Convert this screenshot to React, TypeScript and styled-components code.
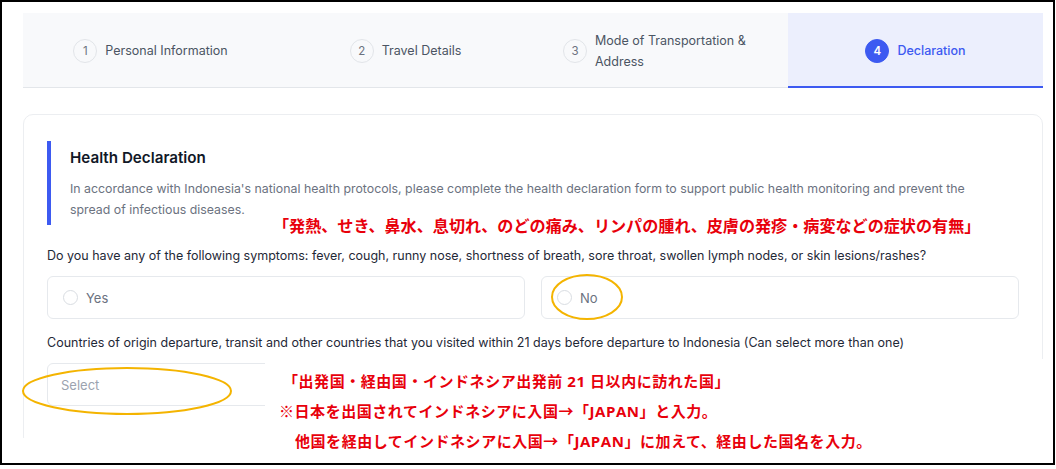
import React from "react";
import styled, { createGlobalStyle } from "styled-components";

const Global = createGlobalStyle`
  html, body { margin: 0; padding: 0; background: #ffffff; }
  body { font-family: Inter, "Noto Sans", Arial, sans-serif; }
  * { box-sizing: border-box; }
`;

const Frame = styled.div`
  position: relative;
  width: 1055px;
  height: 465px;
  border: 2px solid #000;
  background: #fff;
  overflow: hidden;
`;

const Shot = styled.div`
  height: 436px;
  overflow: hidden;
  padding: 11px 10px 0 21px;
  display: flex;
  flex-direction: column;
  gap: 26px;
  & > * { flex-shrink: 0; }
`;

const TabBar = styled.div`
  display: grid;
  grid-template-columns: repeat(4, 1fr);
  height: 75px;
  background: #f8f9fb;
  border-bottom: 1px solid #e3e6ea;
`;

const Tab = styled.div<{ $active?: boolean }>`
  display: flex;
  align-items: center;
  justify-content: center;
  gap: 8px;
  background: ${(p) => (p.$active ? "#eceffd" : "transparent")};
  box-shadow: ${(p) => (p.$active ? "inset 0 -2px 0 #3d5af1" : "none")};
  margin-bottom: -1px;
`;

const StepNum = styled.span<{ $active?: boolean }>`
  flex: none;
  width: 24px;
  height: 24px;
  border-radius: 50%;
  display: flex;
  align-items: center;
  justify-content: center;
  font-size: 11.5px;
  font-weight: ${(p) => (p.$active ? 600 : 400)};
  color: ${(p) => (p.$active ? "#ffffff" : "#6b7280")};
  background: ${(p) => (p.$active ? "#3d5af1" : "transparent")};
  border: 1px solid ${(p) => (p.$active ? "#3d5af1" : "#e2e5e9")};
`;

const StepLabel = styled.span<{ $active?: boolean }>`
  max-width: 163px;
  font-size: 12.5px;
  line-height: 21px;
  font-weight: ${(p) => (p.$active ? 500 : 400)};
  color: ${(p) => (p.$active ? "#3d5af1" : "#4b5563")};
`;

const Card = styled.div`
  border: 1px solid #eceef1;
  border-radius: 10px;
  padding: 26px 23px 40px 23px;
  display: flex;
  flex-direction: column;
`;

const Header = styled.div`
  border-left: 4px solid #3d5af1;
  padding: 5px 0 5px 19px;
`;

const Title = styled.h2`
  margin: 0 0 8px 0;
  font-size: 15.2px;
  line-height: 24px;
  font-weight: 600;
  color: #111827;
`;

const Desc = styled.p`
  margin: 0;
  max-width: 900px;
  font-size: 12.35px;
  line-height: 21px;
  color: #6b7280;
`;

const Question = styled.div<{ $top: number }>`
  margin-top: ${(p) => p.$top}px;
  font-size: 12.5px;
  line-height: 20px;
  color: #1f2937;
`;

const Options = styled.div`
  margin-top: 10px;
  display: grid;
  grid-template-columns: 1fr 1fr;
  gap: 16px;
`;

const Option = styled.label`
  height: 43px;
  border: 1px solid #e6e9ed;
  border-radius: 6px;
  display: flex;
  align-items: center;
  gap: 8px;
  padding-left: 15px;
  font-size: 13px;
  color: #6b7280;
`;

const Radio = styled.span`
  width: 15px;
  height: 15px;
  border-radius: 50%;
  border: 1px solid #d9dde2;
  background: #fff;
`;

const SelectBox = styled.div`
  margin-top: 10px;
  height: 43px;
  border: 1px solid #e6e9ed;
  border-radius: 6px;
  display: flex;
  align-items: center;
  padding-left: 13px;
  font-size: 13px;
  color: #9ca3af;
`;

const Note = styled.div`
  position: absolute;
  left: 271px;
  top: 218px;
  font-family: "Noto Sans CJK JP", sans-serif;
  font-weight: 700;
  font-size: 16.1px;
  line-height: 10px;
  color: #e8000b;
  white-space: nowrap;
`;

const NoteBox = styled.div`
  position: absolute;
  left: 263px;
  top: 357px;
  right: 0;
  bottom: 0;
  background: #fff;
  padding-top: 7px;
  display: flex;
  flex-direction: column;
`;

const NoteLine = styled.div<{ $indent: number }>`
  padding-left: ${(p) => p.$indent}px;
  font-family: "Open Sans", "Noto Sans CJK JP", sans-serif;
  font-weight: 700;
  font-size: 15px;
  letter-spacing: 0.55px;
  line-height: 30px;
  color: #e8000b;
  white-space: nowrap;
`;

const Cjk = styled.span`
  font-family: "Noto Sans CJK JP", sans-serif;
`;

const Ring = styled.svg<{ $x: number; $y: number }>`
  position: absolute;
  left: ${(p) => p.$x}px;
  top: ${(p) => p.$y}px;
  overflow: visible;
`;

function Ellipse({ x, y, w, h }: { x: number; y: number; w: number; h: number }) {
  return (
    <Ring $x={x} $y={y} width={w} height={h} viewBox={`0 0 ${w} ${h}`}>
      <ellipse cx={w / 2} cy={h / 2} rx={w / 2 - 1} ry={h / 2 - 1} fill="none" stroke="#f4b400" strokeWidth={2} />
    </Ring>
  );
}

const steps = [
  { n: 1, label: "Personal Information" },
  { n: 2, label: "Travel Details" },
  { n: 3, label: "Mode of Transportation & Address" },
  { n: 4, label: "Declaration", active: true },
];

export default function App() {
  return (
    <>
      <Global />
      <Frame>
        <Shot>
          <TabBar>
            {steps.map((s) => (
              <Tab key={s.n} $active={s.active}>
                <StepNum $active={s.active}>{s.n}</StepNum>
                <StepLabel $active={s.active}>{s.label}</StepLabel>
              </Tab>
            ))}
          </TabBar>
          <Card>
            <Header>
              <Title>Health Declaration</Title>
              <Desc>
                In accordance with Indonesia's national health protocols, please complete the health declaration form to
                support public health monitoring and prevent the spread of infectious diseases.
              </Desc>
            </Header>
            <Question $top={21}>
              Do you have any of the following symptoms: fever, cough, runny nose, shortness of breath, sore throat,
              swollen lymph nodes, or skin lesions/rashes?
            </Question>
            <Options>
              <Option>
                <Radio />
                Yes
              </Option>
              <Option>
                <Radio />
                No
              </Option>
            </Options>
            <Question $top={14}>
              Countries of origin departure, transit and other countries that you visited within 21 days before
              departure to Indonesia (Can select more than one)
            </Question>
            <SelectBox>Select</SelectBox>
          </Card>
        </Shot>

        <Note>「発熱、せき、鼻水、息切れ、のどの痛み、リンパの腫れ、皮膚の発疹・病変などの症状の有無」</Note>
        <NoteBox>
          <NoteLine $indent={18}>
            <Cjk>「出発国・経由国・インドネシア出発前</Cjk> 21 <Cjk>日以内に訪れた国」</Cjk>
          </NoteLine>
          <NoteLine $indent={14}>
            <Cjk>※日本を出国されてインドネシアに入国→「</Cjk>JAPAN<Cjk>」と入力。</Cjk>
          </NoteLine>
          <NoteLine $indent={30}>
            <Cjk>他国を経由してインドネシアに入国→「</Cjk>JAPAN<Cjk>」に加えて、経由した国名を入力。</Cjk>
          </NoteLine>
        </NoteBox>
        <Ellipse x={549} y={272} w={72} h={46} />
        <Ellipse x={20} y={365} w={210} h={48} />
      </Frame>
    </>
  );
}
